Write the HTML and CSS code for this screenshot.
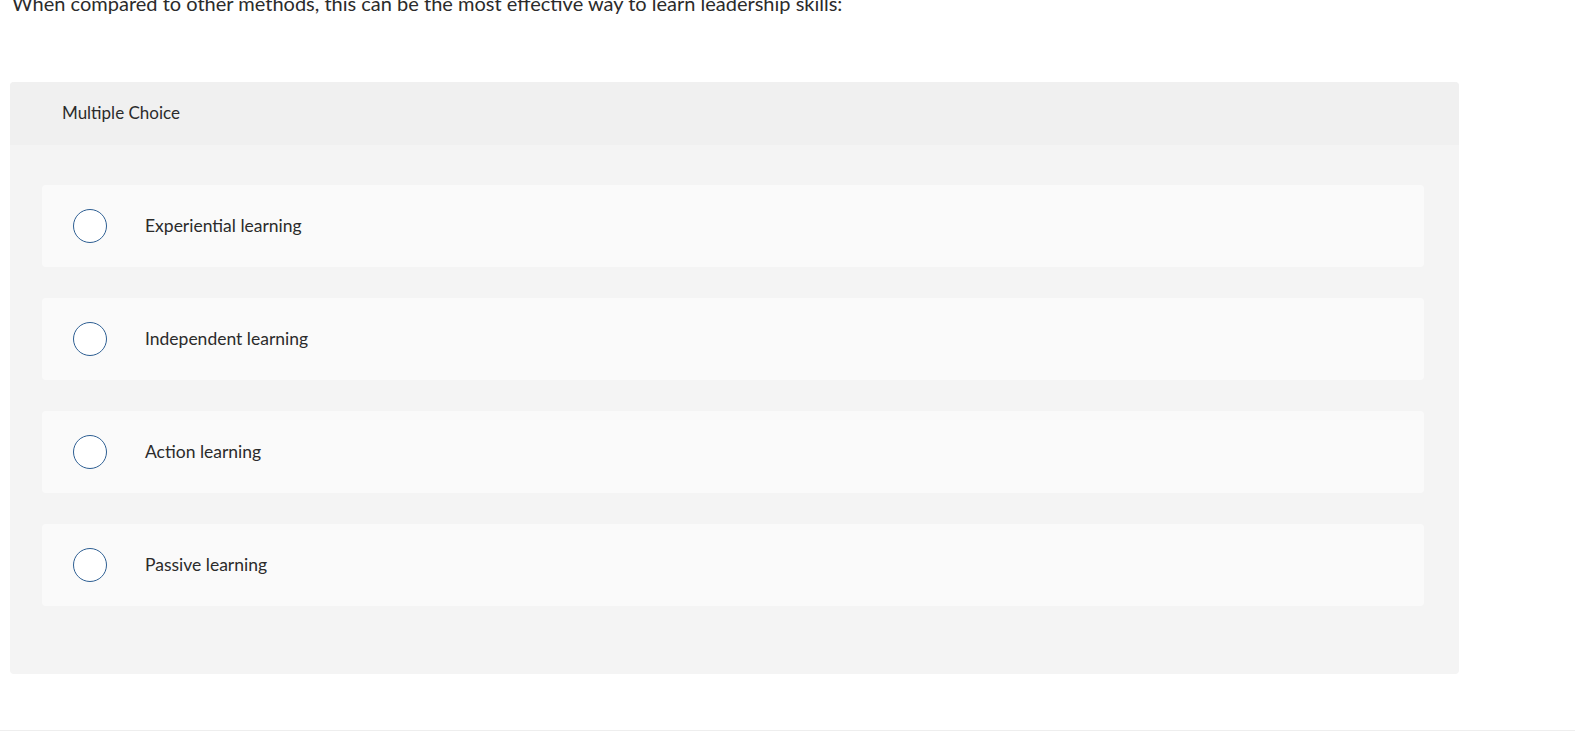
FILE: index.html
```html
<!DOCTYPE html>
<html>
<head>
<meta charset="utf-8">
<link rel="stylesheet" href="styles.css">
</head>
<body>
<div class="page">
  <p class="prompt">When compared to other methods, this can be the most effective way to learn leadership skills:</p>
  <section class="card">
    <div class="card-head">Multiple Choice</div>
    <div class="card-body">
      <label class="option"><span class="radio"></span><span class="opt-text">Experiential learning</span></label>
      <label class="option"><span class="radio"></span><span class="opt-text">Independent learning</span></label>
      <label class="option"><span class="radio"></span><span class="opt-text">Action learning</span></label>
      <label class="option"><span class="radio"></span><span class="opt-text">Passive learning</span></label>
    </div>
  </section>
  <div class="rule"></div>
</div>
</body>
</html>
```
FILE: styles.css
```css
html, body {
  margin: 0;
  padding: 0;
  background: #fff;
}
body {
  font-family: Lato, "Liberation Sans", sans-serif;
  color: #2b2b2b;
  overflow: hidden;
}
.page {
  height: 737px;
  display: flex;
  flex-direction: column;
}
.prompt {
  margin: -9px 0 0 12px;
  font-size: 20px;
  line-height: 24px;
  height: 24px;
  color: #2b2b2b;
}
.card {
  margin: 67px 0 0 10px;
  width: 1449px;
  background: #f4f4f4;
  border-radius: 4px;
  overflow: hidden;
}
.card-head {
  height: 63px;
  background: #f0f0f0;
  padding-left: 52px;
  display: flex;
  align-items: center;
  font-size: 17px;
  padding-bottom: 2px;
  box-sizing: border-box;
  color: #2b2b2b;
}
.card-body {
  padding: 40px 35px 68px 32px;
  display: flex;
  flex-direction: column;
  gap: 31px;
}
.option {
  height: 82px;
  background: #fafafa;
  border-radius: 4px;
  display: flex;
  align-items: center;
  padding-left: 31px;
}
.radio {
  width: 32px;
  height: 32px;
  border: 1.6px solid #2e5f93;
  border-radius: 50%;
  background: #fff;
  flex: none;
}
.opt-text {
  margin-left: 38px;
  font-size: 17.5px;
  padding-bottom: 2px;
  color: #2b2b2b;
}
.rule {
  margin-top: auto;
  margin-bottom: 6px;
  height: 1px;
  background: #eeeeee;
}
```
